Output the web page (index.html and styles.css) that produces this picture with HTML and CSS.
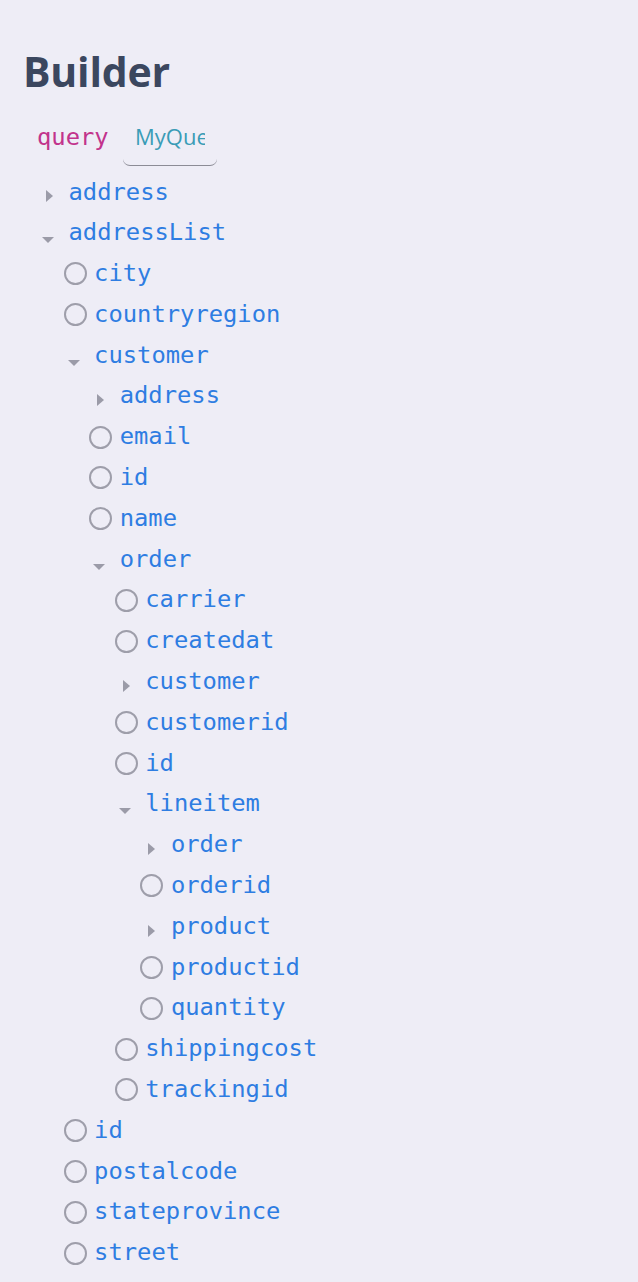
FILE: index.html
```html
<!DOCTYPE html>
<html lang="en">
<head>
<meta charset="utf-8">
<title>Builder</title>
<link rel="stylesheet" href="styles.css">
</head>
<body>
<main class="builder">
  <h1 class="title">Builder</h1>
  <div class="op-row">
    <span class="kw">query</span>
    <input class="op-name" type="text" value="MyQuery">
  </div>
  <ul class="tree">
    <li class="row lvl-0"><span class="ic"><svg class="tri-r" width="7" height="12" viewBox="0 0 7 12"><path d="M0 0 L7 6 L0 12 Z"/></svg></span><span class="name">address</span></li>
    <li class="row lvl-0"><span class="ic"><svg class="tri-d" width="12" height="6" viewBox="0 0 12 6"><path d="M0 0 L12 0 L6 6 Z"/></svg></span><span class="name">addressList</span></li>
    <li class="row lvl-1"><span class="ic"><span class="circ"></span></span><span class="name">city</span></li>
    <li class="row lvl-1"><span class="ic"><span class="circ"></span></span><span class="name">countryregion</span></li>
    <li class="row lvl-1"><span class="ic"><svg class="tri-d" width="12" height="6" viewBox="0 0 12 6"><path d="M0 0 L12 0 L6 6 Z"/></svg></span><span class="name">customer</span></li>
    <li class="row lvl-2"><span class="ic"><svg class="tri-r" width="7" height="12" viewBox="0 0 7 12"><path d="M0 0 L7 6 L0 12 Z"/></svg></span><span class="name">address</span></li>
    <li class="row lvl-2"><span class="ic"><span class="circ"></span></span><span class="name">email</span></li>
    <li class="row lvl-2"><span class="ic"><span class="circ"></span></span><span class="name">id</span></li>
    <li class="row lvl-2"><span class="ic"><span class="circ"></span></span><span class="name">name</span></li>
    <li class="row lvl-2"><span class="ic"><svg class="tri-d" width="12" height="6" viewBox="0 0 12 6"><path d="M0 0 L12 0 L6 6 Z"/></svg></span><span class="name">order</span></li>
    <li class="row lvl-3"><span class="ic"><span class="circ"></span></span><span class="name">carrier</span></li>
    <li class="row lvl-3"><span class="ic"><span class="circ"></span></span><span class="name">createdat</span></li>
    <li class="row lvl-3"><span class="ic"><svg class="tri-r" width="7" height="12" viewBox="0 0 7 12"><path d="M0 0 L7 6 L0 12 Z"/></svg></span><span class="name">customer</span></li>
    <li class="row lvl-3"><span class="ic"><span class="circ"></span></span><span class="name">customerid</span></li>
    <li class="row lvl-3"><span class="ic"><span class="circ"></span></span><span class="name">id</span></li>
    <li class="row lvl-3"><span class="ic"><svg class="tri-d" width="12" height="6" viewBox="0 0 12 6"><path d="M0 0 L12 0 L6 6 Z"/></svg></span><span class="name">lineitem</span></li>
    <li class="row lvl-4"><span class="ic"><svg class="tri-r" width="7" height="12" viewBox="0 0 7 12"><path d="M0 0 L7 6 L0 12 Z"/></svg></span><span class="name">order</span></li>
    <li class="row lvl-4"><span class="ic"><span class="circ"></span></span><span class="name">orderid</span></li>
    <li class="row lvl-4"><span class="ic"><svg class="tri-r" width="7" height="12" viewBox="0 0 7 12"><path d="M0 0 L7 6 L0 12 Z"/></svg></span><span class="name">product</span></li>
    <li class="row lvl-4"><span class="ic"><span class="circ"></span></span><span class="name">productid</span></li>
    <li class="row lvl-4"><span class="ic"><span class="circ"></span></span><span class="name">quantity</span></li>
    <li class="row lvl-3"><span class="ic"><span class="circ"></span></span><span class="name">shippingcost</span></li>
    <li class="row lvl-3"><span class="ic"><span class="circ"></span></span><span class="name">trackingid</span></li>
    <li class="row lvl-1"><span class="ic"><span class="circ"></span></span><span class="name">id</span></li>
    <li class="row lvl-1"><span class="ic"><span class="circ"></span></span><span class="name">postalcode</span></li>
    <li class="row lvl-1"><span class="ic"><span class="circ"></span></span><span class="name">stateprovince</span></li>
    <li class="row lvl-1"><span class="ic"><span class="circ"></span></span><span class="name">street</span></li>
    <li class="row lvl-0"><span class="ic"><svg class="tri-r" width="7" height="12" viewBox="0 0 7 12"><path d="M0 0 L7 6 L0 12 Z"/></svg></span><span class="name">lineitemList</span></li>
  </ul>
</main>
</body>
</html>
```

FILE: styles.css
```css
html, body {
  margin: 0;
  padding: 0;
  background: #eeedf6;
}

body {
  overflow: hidden;
}

.builder {
  padding: 0 0 0 24px;
}

.title {
  margin: 47px 0 0 -1px;
  font-family: "Open Sans", "Noto Sans", sans-serif;
  font-weight: 700;
  font-size: 41px;
  line-height: 48px;
  color: #3b475f;
  letter-spacing: -0.2px;
}

.op-row {
  display: flex;
  align-items: baseline;
  margin-top: 23px;
}

.kw {
  margin-left: 13px;
  width: 86px;
  font-family: "DejaVu Sans Mono", "Liberation Mono", monospace;
  font-size: 23.8px;
  color: #c2338c;
}

.op-name {
  box-sizing: border-box;
  width: 94px;
  height: 48px;
  padding: 0 12px 12px 12px;
  margin: 0;
  border: none;
  border-bottom: 1px solid #8c8c96;
  border-radius: 0 0 7px 7px;
  background: transparent;
  font-family: "Open Sans", "Noto Sans", sans-serif;
  font-size: 22px;
  color: #3a9cb6;
  outline: none;
}

.tree {
  list-style: none;
  margin: 6px 0 0 0;
  padding: 0 0 0 13px;
}

.row {
  display: flex;
  align-items: center;
  height: 40.8px;
}

.lvl-0 { padding-left: 0; }
.lvl-1 { padding-left: 25.6px; }
.lvl-2 { padding-left: 51.2px; }
.lvl-3 { padding-left: 76.8px; }
.lvl-4 { padding-left: 102.4px; }

.ic {
  display: flex;
  align-items: center;
  width: 31.5px;
  flex-shrink: 0;
}

.circ {
  box-sizing: border-box;
  display: block;
  width: 23px;
  height: 23px;
  margin-left: 1px;
  border: 2px solid #9e9eaa;
  border-radius: 50%;
}

.tri-r {
  display: block;
  margin-left: 9px;
  margin-top: 8px;
  fill: #9b9ba8;
}

.tri-d {
  display: block;
  margin-left: 5px;
  margin-top: 14px;
  fill: #9b9ba8;
}

.name {
  font-family: "DejaVu Sans Mono", "Liberation Mono", monospace;
  font-size: 23.8px;
  line-height: 1;
  color: #2e7de2;
}
```
